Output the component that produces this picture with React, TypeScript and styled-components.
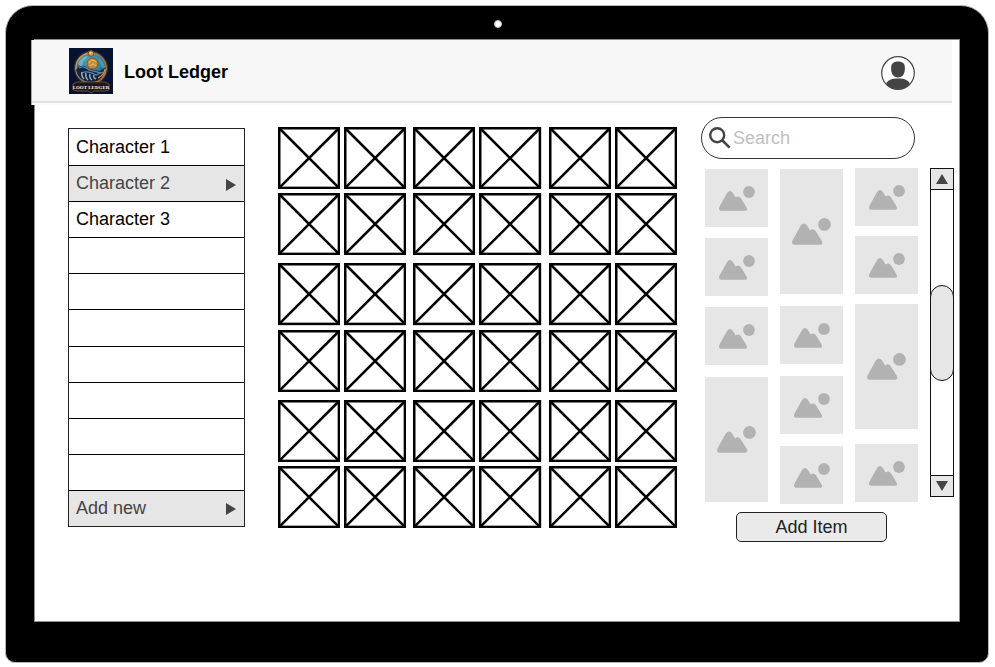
import React, { useState } from "react";
import styled, { createGlobalStyle } from "styled-components";

const GlobalStyle = createGlobalStyle`
  *, *::before, *::after { box-sizing: border-box; }
  body {
    margin: 0;
    background: #fff;
    font-family: "Liberation Sans", Arial, sans-serif;
    font-size: 18px;
    line-height: 20px;
    color: #000;
  }
  button, input { font: inherit; }
`;

const Page = styled.div`
  min-height: 100vh;
  padding: 5px 6px 4px 5px;
  display: flex;
`;

const Device = styled.div`
  flex: 1;
  display: flex;
  flex-direction: column;
  padding: 0 28px 40px;
  background: #000;
  border: 1px solid #b4b8b6;
  border-radius: 28px 28px 10px 10px;
`;

const Bezel = styled.div`
  height: 33px;
  display: flex;
  align-items: center;
  justify-content: center;
  padding: 2px 0 0 1px;
`;

const Camera = styled.span`
  width: 8px;
  height: 8px;
  border-radius: 50%;
  background: #fff;
  border: 1px solid #b8b8b8;
`;

const Screen = styled.div`
  flex: 1;
  background: #fff;
  border: 1px solid #8c8f8e;
`;

const Header = styled.header`
  height: 65px;
  margin: 0 7px 0 -4px;
  padding: 0 37px 4px;
  display: flex;
  align-items: center;
  gap: 11px;
  background: linear-gradient(#f7f7f7 61px, #e2e2e2 61px, #e2e2e2 63px, #fbfbfb 63px);
  border-left: 1px solid #a8a8a8;
`;

const Title = styled.h1`
  flex: 1;
  margin: 0;
  padding-top: 3px;
  font-size: 18px;
  font-weight: 700;
`;

const IconButton = styled.button`
  display: flex;
  padding: 5px 0 0;
  border: 0;
  background: none;
`;

const Workspace = styled.main`
  display: grid;
  grid-template-columns: minmax(0, 177fr) 33px minmax(0, 399fr) 24px minmax(0, 253fr);
  align-items: start;
  padding: 12px 5px 78px 33px;

  & > :nth-child(2) { grid-column: 3; }
  & > :nth-child(3) { grid-column: 5; }
`;

const List = styled.ul`
  list-style: none;
  margin: 11px 0 0;
  padding: 0;
  display: grid;
  grid-template-rows: repeat(11, 1fr);
  height: 399px;
  border: 1px solid #222;
`;

const ListItem = styled.li`
  display: flex;
  & + & { border-top: 1px solid #000; }
`;

const Row = styled.button<{ $shaded: boolean }>`
  flex: 1;
  display: flex;
  align-items: center;
  justify-content: space-between;
  padding: 0 8px 1px 7px;
  border: 0;
  text-align: left;
  background: ${(p) => (p.$shaded ? "#e6e6e6" : "#fff")};
  color: ${(p) => (p.$shaded ? "#444" : "#000")};
`;

const Slots = styled.section`
  margin: 10px 0 0;
  display: grid;
  grid-template-columns: repeat(3, 1fr);
  gap: 8px 7px;
`;

const SlotGroup = styled.div`
  display: grid;
  grid-template-columns: 1fr 1fr;
  gap: 4px;
`;

const SlotBox = styled.svg`
  display: block;
  width: 100%;
  aspect-ratio: 1;
`;

const Items = styled.aside`
  display: flex;
  flex-direction: column;
`;

const Search = styled.label`
  height: 42px;
  margin-right: 39px;
  padding: 0 20px 0 7px;
  display: flex;
  align-items: center;
  gap: 2px;
  border: 1px solid #333;
  border-radius: 21px;
`;

const SearchInput = styled.input`
  flex: 1;
  min-width: 0;
  padding: 0;
  border: 0;
  outline: 0;
  background: none;
  &::placeholder { color: #c0c0c0; opacity: 1; }
`;

const Browser = styled.div`
  display: grid;
  grid-template-columns: 1fr 24px;
  gap: 12px;
  align-items: start;
  padding: 9px 0 0 4px;
`;

const Gallery = styled.div`
  display: grid;
  grid-template-columns: repeat(3, 1fr);
  gap: 12px;
  height: 335px;
`;

const GalleryColumn = styled.div<{ $top: number; $bottom: number; $gap: number }>`
  display: flex;
  flex-direction: column;
  gap: ${(p) => p.$gap}px;
  padding: ${(p) => p.$top}px 0 ${(p) => p.$bottom}px;
  & > :last-child { margin-top: auto; }
`;

const Thumb = styled.button<{ $tall: boolean }>`
  height: ${(p) => (p.$tall ? 125 : 58)}px;
  display: flex;
  align-items: center;
  justify-content: center;
  padding: 0;
  border: 0;
  background: #e6e6e6;
`;

const Scrollbar = styled.div`
  height: 329px;
  display: flex;
  flex-direction: column;
  border: 1px solid #111;
`;

const ScrollButton = styled.button<{ $end?: boolean }>`
  height: 21px;
  padding: 0;
  display: flex;
  align-items: center;
  justify-content: center;
  background: #e6e6e6;
  border: 0 solid #111;
  border-width: ${(p) => (p.$end ? "1px 0 0" : "0 0 1px")};
`;

const ScrollThumb = styled.div`
  height: 96px;
  margin: auto -1px;
  background: #e6e6e6;
  border: 1px solid #111;
  border-radius: 12px;
`;

const AddButton = styled.button`
  width: 151px;
  height: 30px;
  margin: 9px 67px 0 0;
  padding: 0;
  align-self: flex-end;
  border: 1px solid #222;
  border-radius: 5px;
  background: #eaeaea;
  color: #222;
`;

const Logo = () => (
  <svg width="44" height="46" viewBox="0 0 44 46" role="img" aria-label="Loot Ledger logo">
    <defs>
      <linearGradient id="ring" x1="0" y1="0" x2="1" y2="1">
        <stop offset="0" stopColor="#d9a052" />
        <stop offset="0.5" stopColor="#8f7050" />
        <stop offset="1" stopColor="#c96f2b" />
      </linearGradient>
      <radialGradient id="sky" cx="0.5" cy="0.3" r="0.7">
        <stop offset="0" stopColor="#58b9c9" />
        <stop offset="0.6" stopColor="#28718f" />
        <stop offset="1" stopColor="#0d2445" />
      </radialGradient>
    </defs>
    <rect width="44" height="46" fill="#07122e" />
    <circle cx="22" cy="20" r="15" fill="url(#sky)" stroke="url(#ring)" strokeWidth="2" />
    <circle cx="22" cy="20" r="16.6" fill="none" stroke="#2a4968" strokeWidth="0.7" />
    <path d="M9 16 Q12 8 19 8 L14 14 L13 21Z" fill="#8fcbd0" opacity=".65" />
    <path d="M29 9 Q36 13 36 22 L32 18Z" fill="#3f9bb0" />
    <circle cx="23.5" cy="15.5" r="5.5" fill="#c98a3e" stroke="#7b4f2b" />
    <path d="M20 15 Q23 10 27 14 M21 18 Q24 14 27 18" fill="none" stroke="#f0bd68" />
    <path d="M7 22 Q13 14 20 21 L31 23 L37 19 L34 27 Q31 34 22 34 Q12 33 9 27Z" fill="#142440" />
    <path d="M10 20 Q15 17 20 22 L32 25 M13 25 Q18 22 27 27 L34 24" fill="none" stroke="#5686a3" strokeWidth="1.3" />
    <path d="M13 24 Q12 28 15 31 M17 25 Q16 29 19 32 M21 26 Q20 30 23 32 M25 27 Q24 30 27 31" fill="none" stroke="#93a9b8" strokeWidth="1.5" />
    <path d="M29 30 Q35 27 36 21" fill="none" stroke="#df8b39" strokeWidth="1.4" />
    <circle cx="22" cy="5.5" r="2.8" fill="#d69a46" stroke="#7d4c28" />
    <circle cx="21.5" cy="4.8" r="1" fill="#ffe09a" />
    <path d="M4 36 L8 34 H36 L40 36 V42 L36 43 H25 L22 45 L19 43 H8 L4 42Z" fill="#1c1822" stroke="#8a5837" strokeWidth="0.8" />
    <text x="22" y="41" textAnchor="middle" fontFamily="Liberation Serif, serif" fontWeight="700" fontSize="5" fill="#fff0d0">LOOT LEDGER</text>
  </svg>
);

const UserIcon = () => (
  <svg width="34" height="34" viewBox="0 0 34 34" aria-hidden="true">
    <circle cx="17" cy="17" r="16.3" fill="#fff" />
    <path d="M5.2 28 C6.5 23.6 11 22.4 17 22.4 S27.5 23.6 28.8 28 Q24 33.2 17 33.2 T5.2 28Z" fill="#444" />
    <path d="M17 5.4 C22 5.4 23.9 7.6 23.9 12 C23.9 18 21.7 21.4 17 21.4 S10.1 18 10.1 12 C10.1 7.6 12 5.4 17 5.4Z" fill="#444" />
    <circle cx="17" cy="17" r="16.3" fill="none" stroke="#444" strokeWidth="1.2" />
  </svg>
);

const SearchIcon = () => (
  <svg width="22" height="22" viewBox="0 0 22 22" aria-hidden="true">
    <circle cx="8.2" cy="8.2" r="7" fill="none" stroke="#444" strokeWidth="2.4" />
    <path d="M13 13 L20.6 20.6" stroke="#444" strokeWidth="2.6" />
  </svg>
);

const ArrowIcon = () => (
  <svg width="10" height="15" viewBox="0 0 10 15" aria-hidden="true">
    <path d="M0 3 L10 9 L0 15Z" fill="#444" />
  </svg>
);

const ScrollArrow = ({ down }: { down?: boolean }) => (
  <svg width="12" height="10" viewBox="0 0 12 10" aria-hidden="true">
    <path d={down ? "M0 0 H12 L6 10Z" : "M0 10 H12 L6 0Z"} fill="#444" />
  </svg>
);

const PictureIcon = ({ tall }: { tall: boolean }) => (
  <svg width={tall ? 39 : 36} height={tall ? 27 : 25} viewBox="0 0 36 25" aria-hidden="true">
    <path
      d="M8.2 6.8 Q11 3.4 13.8 6.8 L16.7 11.6 Q19.6 9 21.8 12 L27.6 21.4 Q29 24.6 26 24.8 H2 Q-1 24.4 .4 20.8Z"
      fill="#b2b2b2"
    />
    <circle cx="30" cy="6" r="5.9" fill="#b2b2b2" />
  </svg>
);

const Slot = () => (
  <SlotBox viewBox="0 0 62 62" aria-hidden="true">
    <rect x="1.25" y="1.25" width="59.5" height="59.5" fill="#fff" stroke="#000" strokeWidth="2.5" />
    <path d="M1.5 1.5 L60.5 60.5 M60.5 1.5 L1.5 60.5" stroke="#000" strokeWidth="2.5" />
  </SlotBox>
);

const rows = ["Character 1", "Character 2", "Character 3", "", "", "", "", "", "", "", "Add new"];

const gallery = [
  { top: 1, bottom: 2, gap: 11, tall: [false, false, false, true] },
  { top: 1, bottom: 0, gap: 12, tall: [true, false, false, false] },
  { top: 0, bottom: 2, gap: 10, tall: [false, false, true, false] },
];

export default function App() {
  const [selected, setSelected] = useState(1);
  const [query, setQuery] = useState("");

  return (
    <>
      <GlobalStyle />
      <Page>
        <Device>
          <Bezel>
            <Camera />
          </Bezel>
          <Screen>
            <Header>
              <Logo />
              <Title>Loot Ledger</Title>
              <IconButton aria-label="Account">
                <UserIcon />
              </IconButton>
            </Header>
            <Workspace>
              <List>
                {rows.map((name, i) => {
                  const shaded = i === selected || i === rows.length - 1;
                  return (
                    <ListItem key={i}>
                      <Row
                        $shaded={shaded}
                        disabled={!name}
                        onClick={() => i < rows.length - 1 && setSelected(i)}
                      >
                        {name}
                        {shaded && <ArrowIcon />}
                      </Row>
                    </ListItem>
                  );
                })}
              </List>
              <Slots aria-label="Inventory">
                {Array.from({ length: 9 }, (_, g) => (
                  <SlotGroup key={g}>
                    <Slot />
                    <Slot />
                    <Slot />
                    <Slot />
                  </SlotGroup>
                ))}
              </Slots>
              <Items>
                <Search>
                  <SearchIcon />
                  <SearchInput
                    aria-label="Search"
                    placeholder="Search"
                    value={query}
                    onChange={(e) => setQuery(e.target.value)}
                  />
                </Search>
                <Browser>
                  <Gallery>
                    {gallery.map((column, c) => (
                      <GalleryColumn key={c} $top={column.top} $bottom={column.bottom} $gap={column.gap}>
                        {column.tall.map((tall, i) => (
                          <Thumb key={i} $tall={tall} aria-label="Item picture">
                            <PictureIcon tall={tall} />
                          </Thumb>
                        ))}
                      </GalleryColumn>
                    ))}
                  </Gallery>
                  <Scrollbar>
                    <ScrollButton aria-label="Scroll up">
                      <ScrollArrow />
                    </ScrollButton>
                    <ScrollThumb />
                    <ScrollButton $end aria-label="Scroll down">
                      <ScrollArrow down />
                    </ScrollButton>
                  </Scrollbar>
                </Browser>
                <AddButton>Add Item</AddButton>
              </Items>
            </Workspace>
          </Screen>
        </Device>
      </Page>
    </>
  );
}
